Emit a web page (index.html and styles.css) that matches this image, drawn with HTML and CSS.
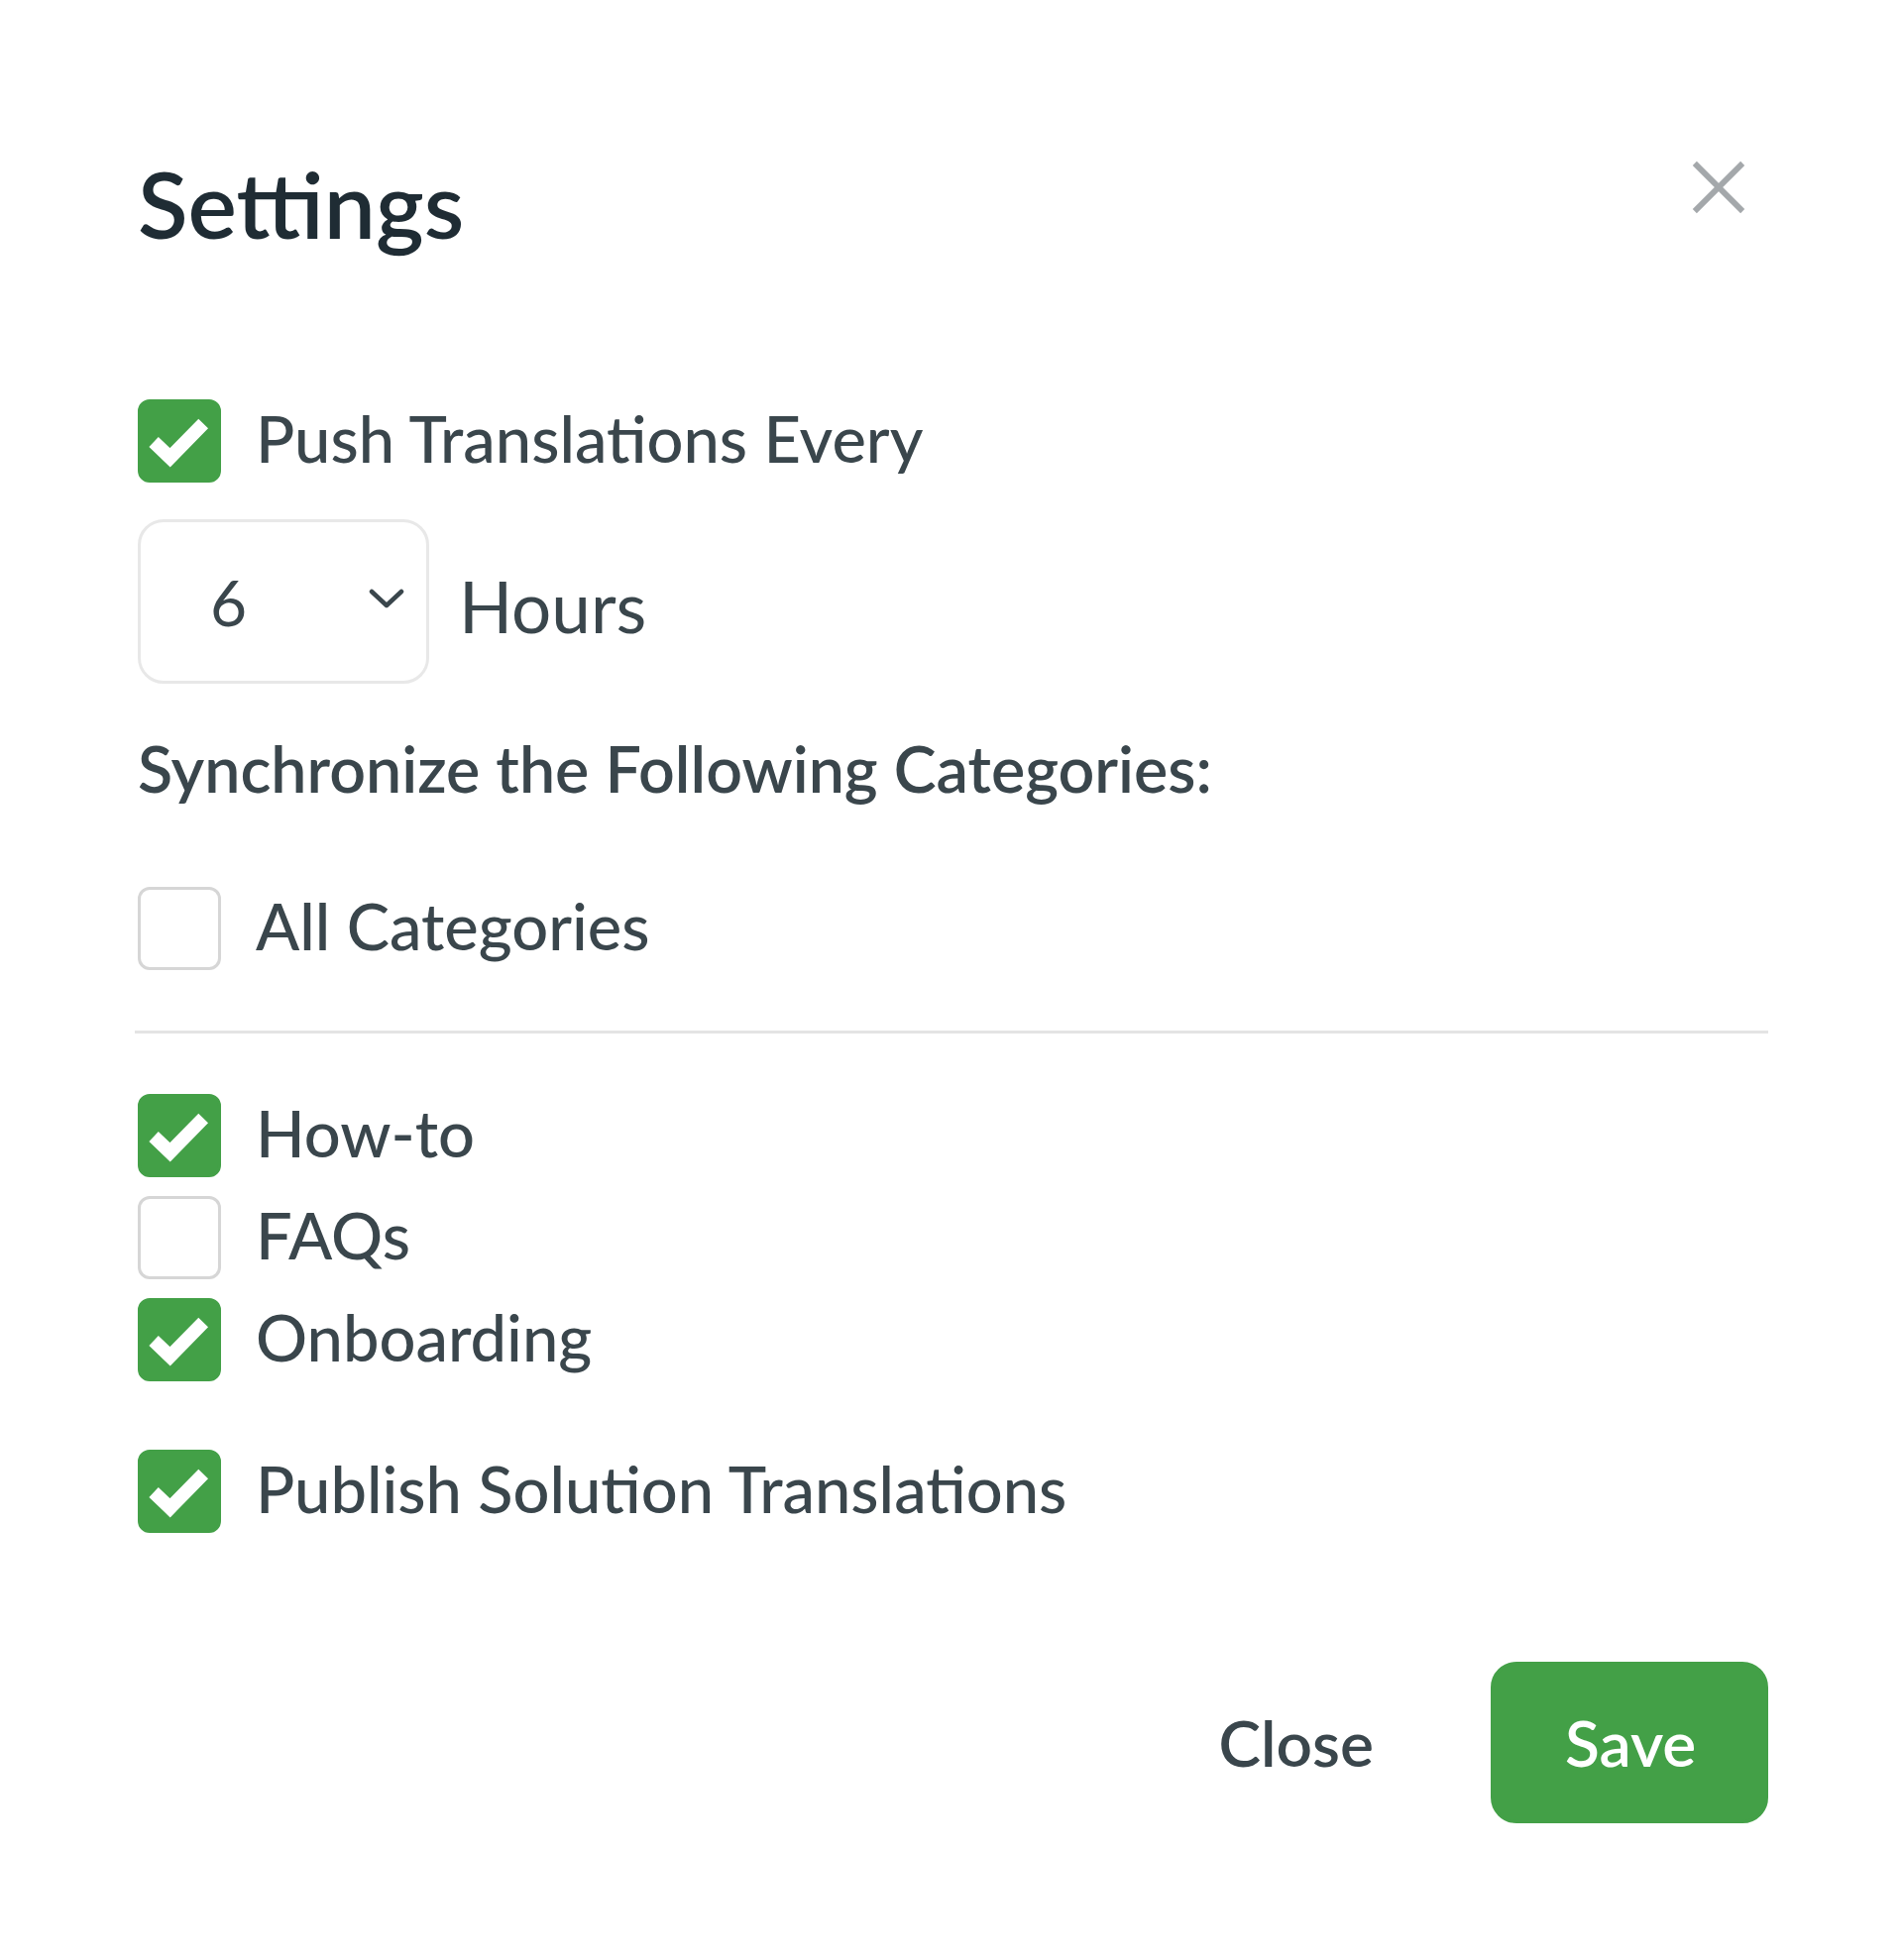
FILE: index.html
```html
<!DOCTYPE html>
<html lang="en">
<head>
<meta charset="utf-8">
<title>Settings</title>
<link rel="stylesheet" href="styles.css">
</head>
<body>
<div class="modal">
  <div class="header">
    <h1 class="title">Settings</h1>
    <svg class="close-x" viewBox="0 0 24 24" aria-hidden="true"><path d="M2 2 L22 22 M22 2 L2 22"/></svg>
  </div>

  <div class="row row-push">
    <span class="box checked"><svg viewBox="0 0 24 24"><path d="M4.6 12.3 L9.3 16.8 L18.9 7"/></svg></span>
    <span class="label">Push Translations Every</span>
  </div>

  <div class="interval">
    <div class="select">
      <span class="select-value">6</span>
      <svg class="chev" viewBox="0 0 36 22"><path d="M3 4 L18 18 L33 4"/></svg>
    </div>
    <span class="hours">Hours</span>
  </div>

  <div class="sync">Synchronize the Following Categories:</div>

  <div class="row row-all">
    <span class="box"></span>
    <span class="label">All Categories</span>
  </div>

  <div class="divider"></div>

  <div class="cats">
    <div class="row">
      <span class="box checked"><svg viewBox="0 0 24 24"><path d="M4.6 12.3 L9.3 16.8 L18.9 7"/></svg></span>
      <span class="label">How-to</span>
    </div>
    <div class="row">
      <span class="box"></span>
      <span class="label">FAQs</span>
    </div>
    <div class="row">
      <span class="box checked"><svg viewBox="0 0 24 24"><path d="M4.6 12.3 L9.3 16.8 L18.9 7"/></svg></span>
      <span class="label">Onboarding</span>
    </div>
  </div>

  <div class="row row-publish">
    <span class="box checked"><svg viewBox="0 0 24 24"><path d="M4.6 12.3 L9.3 16.8 L18.9 7"/></svg></span>
    <span class="label">Publish Solution Translations</span>
  </div>

  <div class="footer">
    <button class="btn btn-close">Close</button>
    <button class="btn btn-save">Save</button>
  </div>
</div>
</body>
</html>
```

FILE: styles.css
```css
html, body {
  margin: 0;
  padding: 0;
  background: #ffffff;
}

body {
  font-family: Lato, "Open Sans", "Noto Sans", sans-serif;
  color: #3a464c;
}

.modal {
  padding: 154px 136px 0 139px;
}

.header {
  display: flex;
  justify-content: space-between;
  align-items: flex-start;
}

.title {
  margin: 0;
  font-size: 93px;
  line-height: 102px;
  font-weight: 600;
  color: #1f2c34;
}

.close-x {
  width: 58px;
  height: 58px;
  margin-top: 6px;
  margin-right: 21px;
  fill: none;
  stroke: #a4a8ab;
  stroke-width: 2.4;
}

.row {
  display: flex;
  align-items: center;
  height: 84px;
}

.row-push {
  margin-top: 147px;
}

.box {
  box-sizing: border-box;
  width: 84px;
  height: 84px;
  flex: 0 0 84px;
  border: 3px solid #d6d6d6;
  border-radius: 12px;
  background: #ffffff;
  display: flex;
  align-items: center;
  justify-content: center;
}

.box.checked {
  border-color: #43a047;
  background: #43a047;
}

.box svg {
  width: 84px;
  height: 84px;
  flex: 0 0 84px;
  fill: none;
  stroke: #ffffff;
  stroke-width: 3.9;
  stroke-linecap: butt;
  stroke-linejoin: miter;
}

.label {
  margin-left: 35px;
  padding-bottom: 6px;
  font-size: 65px;
  line-height: 84px;
  font-weight: 500;
  color: #3a464c;
}

.interval {
  display: flex;
  align-items: center;
  margin-top: 37px;
}

.select {
  box-sizing: border-box;
  width: 294px;
  height: 166px;
  border: 3px solid #e8e8e8;
  border-radius: 26px;
  display: flex;
  align-items: center;
  justify-content: space-between;
  padding: 0 22px 0 70px;
}

.select-value {
  font-size: 64px;
  font-weight: 400;
  color: #3a464c;
}

.chev {
  width: 36px;
  height: 22px;
  margin-top: -6px;
  fill: none;
  stroke: #3a464c;
  stroke-width: 4.5;
  stroke-linecap: round;
  stroke-linejoin: round;
}

.hours {
  margin-left: 30px;
  padding-top: 8px;
  font-size: 71px;
  font-weight: 400;
  color: #3a464c;
}

.sync {
  margin-top: 43px;
  font-size: 64.5px;
  line-height: 84px;
  font-weight: 600;
  color: #3a464c;
}

.row-all {
  margin-top: 78px;
}

.divider {
  margin: 61px 0 0 -3px;
  height: 3px;
  background: #e4e4e4;
}

.cats {
  margin-top: 61px;
  display: flex;
  flex-direction: column;
  gap: 19px;
}

.row-publish {
  margin-top: 69px;
}

.footer {
  margin-top: 130px;
  display: flex;
  justify-content: flex-end;
  align-items: center;
  gap: 43px;
}

.btn {
  font-family: Lato, "Open Sans", "Noto Sans", sans-serif;
  font-size: 64px;
  font-weight: 600;
  height: 163px;
  padding: 0 72px;
  border-radius: 26px;
  border: 3px solid transparent;
  cursor: pointer;
}

.btn-close {
  background: transparent;
  color: #3a464c;
}

.btn-save {
  width: 280px;
  background: #43a047;
  border-color: #43a047;
  color: #ffffff;
}
```
